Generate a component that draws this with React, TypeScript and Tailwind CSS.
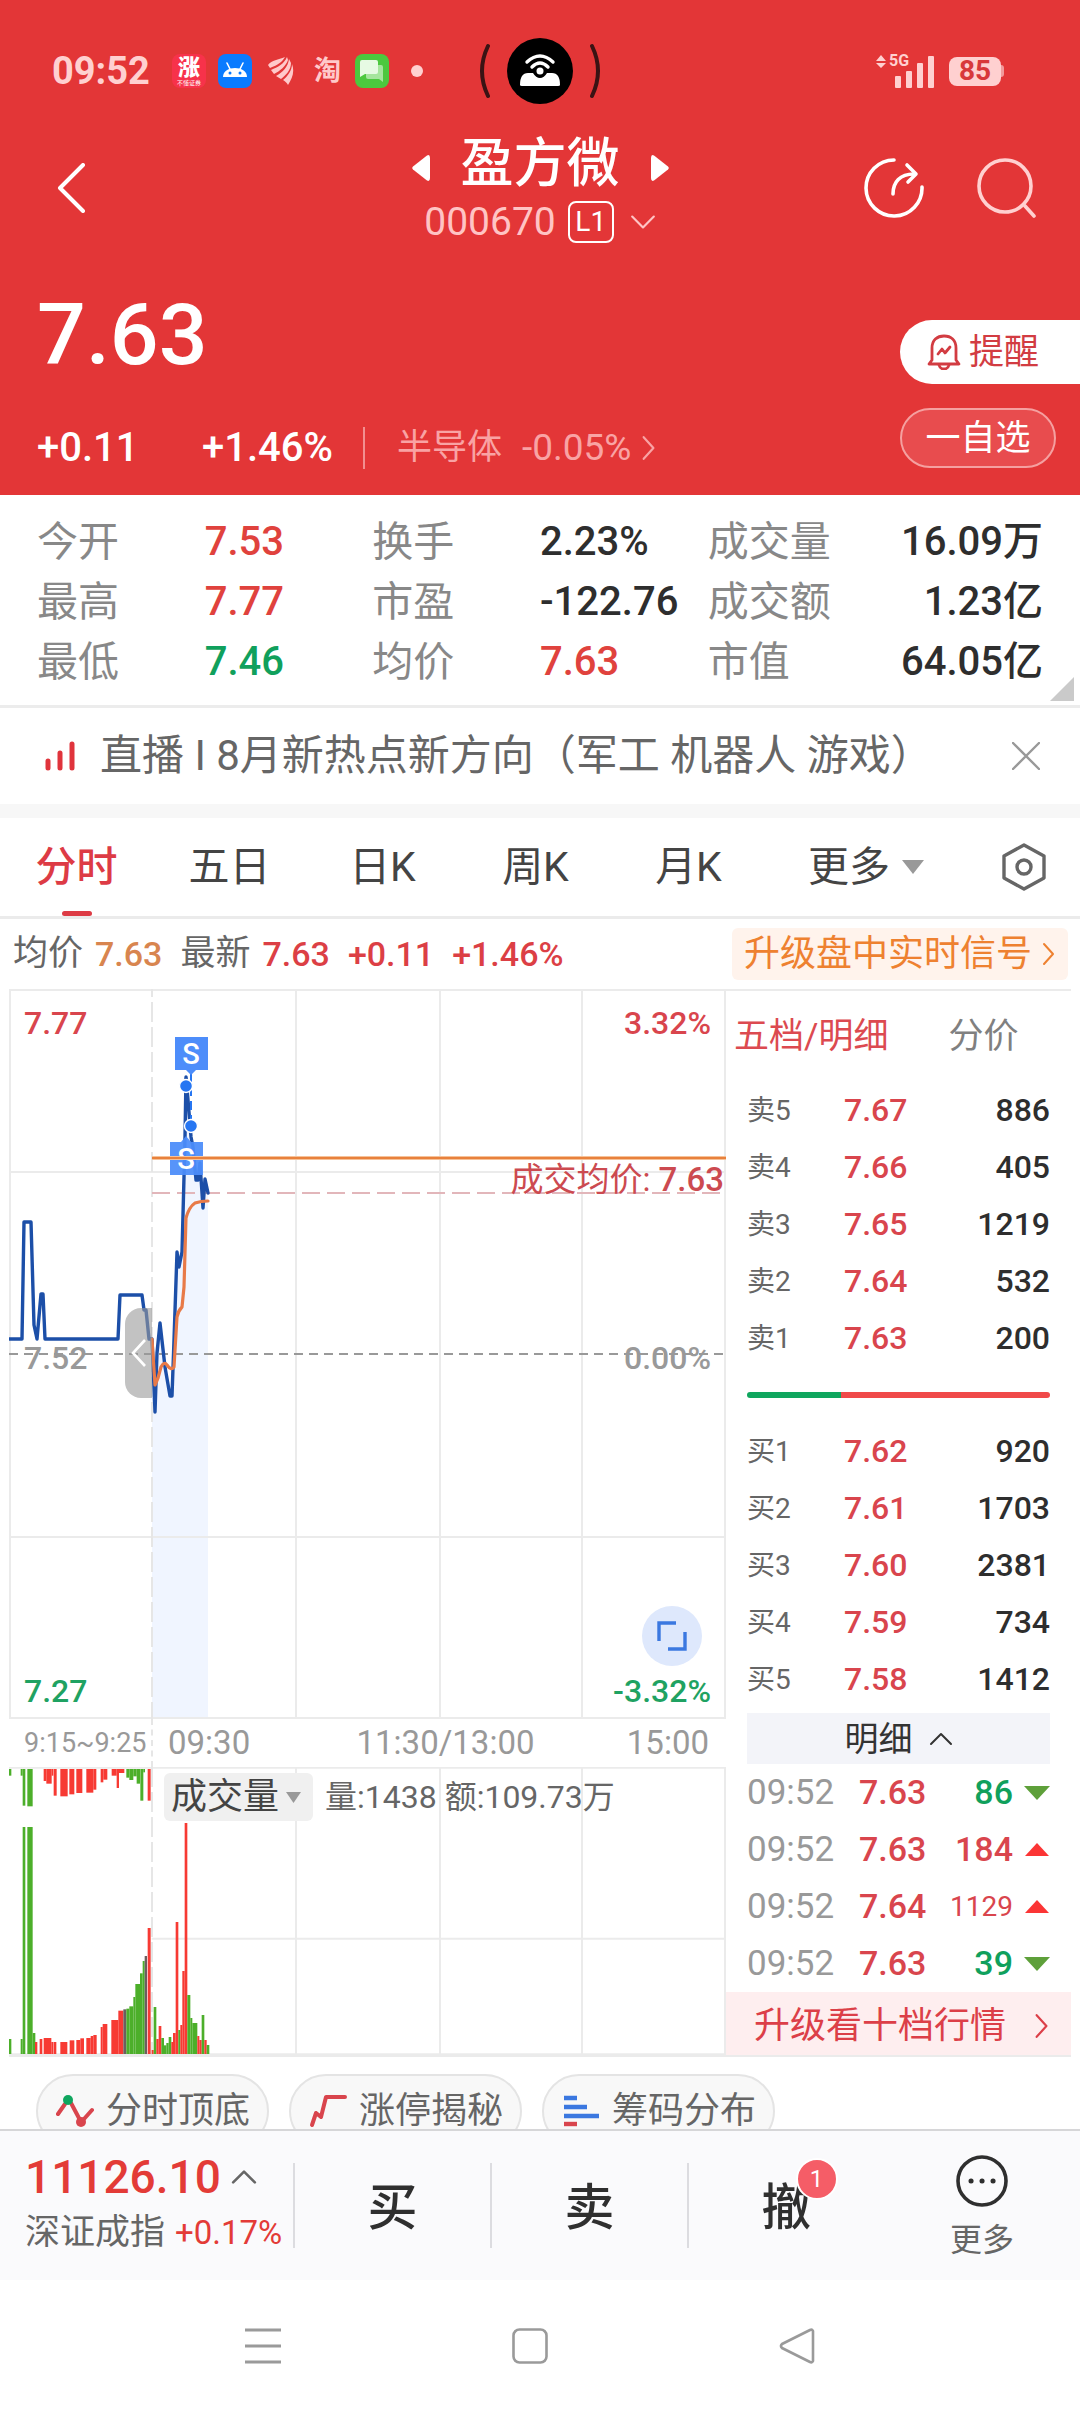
import React from "react";

const RED = "#d9454d";

const stats = [
  { label: "今开", value: "7.53", tone: "text-[#e0423d]" },
  { label: "换手", value: "2.23%", tone: "text-[#2e2e2e]" },
  { label: "成交量", value: "16.09万", tone: "text-[#2e2e2e] text-right" },
  { label: "最高", value: "7.77", tone: "text-[#e0423d]" },
  { label: "市盈", value: "-122.76", tone: "text-[#2e2e2e]" },
  { label: "成交额", value: "1.23亿", tone: "text-[#2e2e2e] text-right" },
  { label: "最低", value: "7.46", tone: "text-[#10a05c]" },
  { label: "均价", value: "7.63", tone: "text-[#e0423d]" },
  { label: "市值", value: "64.05亿", tone: "text-[#2e2e2e] text-right" },
];

const sells = [
  ["卖5", "7.67", "886"],
  ["卖4", "7.66", "405"],
  ["卖3", "7.65", "1219"],
  ["卖2", "7.64", "532"],
  ["卖1", "7.63", "200"],
];

const buys = [
  ["买1", "7.62", "920"],
  ["买2", "7.61", "1703"],
  ["买3", "7.60", "2381"],
  ["买4", "7.59", "734"],
  ["买5", "7.58", "1412"],
];

const ticks = [
  { time: "09:52", price: "7.63", volume: "86", up: false },
  { time: "09:52", price: "7.63", volume: "184", up: true },
  { time: "09:52", price: "7.64", volume: "1129", up: true },
  { time: "09:52", price: "7.63", volume: "39", up: false },
];

const G = "#4caf2a";
const R = "#f73a33";
const N = "#6b5f5f";

/* [x, width, length] of the bars that hang from the top of the volume pane */
const hangingBars: [number, number, number, string][] = [
  [0, 7, 20, G], [35, 6, 20, G], [41, 8, 110, G], [55, 16, 112, G],
  [104, 8, 36, R], [112, 16, 44, R], [128, 5, 20, R], [134, 9, 80, R],
  [154, 22, 82, R], [181, 15, 76, R], [202, 18, 72, R],
  [232, 21, 71, R], [253, 9, 62, R], [275, 8, 40, R], [283, 12, 32, R],
  [308, 15, 20, R], [323, 7, 57, R], [330, 16, 12, R], [352, 9, 26, G],
  [361, 12, 33, G], [373, 10, 22, G], [383, 10, 44, G], [394, 9, 95, G],
  [403, 5, 10, G], [416, 9, 95, R],
];

/* [x, width, height] of the bars that stand on the base line */
const standingBars: [number, number, number, string][] = [
  [0, 7, 45, G], [35, 6, 45, G], [41, 8, 681, G], [55, 16, 681, G],
  [71, 8, 63, G], [78, 7, 36, R], [92, 8, 45, R], [104, 23, 48, R],
  [127, 6, 36, R], [134, 8, 36, R], [154, 21, 36, R], [182, 14, 41, R],
  [202, 12, 42, R], [214, 11, 47, R], [232, 13, 48, R], [245, 8, 54, R],
  [253, 10, 57, R], [275, 6, 81, R], [281, 14, 90, R], [307, 21, 102, R],
  [328, 15, 130, R], [343, 9, 134, N], [352, 9, 136, G], [361, 12, 143, G],
  [373, 6, 171, G], [379, 14, 210, G], [393, 8, 242, G], [401, 6, 279, G],
  [407, 7, 294, N], [416, 9, 378, R], [428, 6, 12, R], [434, 8, 141, G],
  [442, 7, 45, R], [449, 8, 84, R], [457, 8, 48, G], [465, 7, 26, G],
  [472, 7, 33, G], [479, 8, 51, G], [487, 5, 36, R], [492, 8, 63, R],
  [500, 8, 396, R], [508, 6, 72, G], [514, 6, 87, R], [520, 7, 249, R],
  [527, 8, 693, R], [535, 9, 177, G], [544, 6, 108, G], [550, 15, 93, G],
  [565, 6, 54, R], [571, 7, 42, R], [578, 8, 117, G], [586, 7, 42, R],
  [593, 8, 27, G],
];

function Chevron({ dir, className }: { dir: "left" | "right" | "up" | "down"; className: string }) {
  const d = {
    left: "M15 2 L5 12 L15 22",
    right: "M8 2 L17 12 L8 22",
    up: "M2 17 L12 7 L22 17",
    down: "M2 7 L12 17 L22 7",
  }[dir];
  return (
    <svg viewBox="0 0 24 24" className={className} fill="none" stroke="currentColor" strokeLinecap="round" strokeLinejoin="round" aria-hidden="true">
      <path d={d} />
    </svg>
  );
}

function StatusBar() {
  return (
    <div className="grid grid-cols-[1fr_auto_1fr] items-center pt-6">
      <div className="flex items-center pl-[52px]">
        <span className="w-[98px] text-[38px] font-bold leading-[40px] text-[#ffd0d0]">09:52</span>
        <span className="ml-[22px] flex size-[34px] flex-col items-center justify-center rounded-lg bg-[#f7324a] leading-none text-white">
          <span className="text-[22px] font-black leading-[22px]">涨</span>
          <span className="text-[6px] leading-[7px]">不懂证券</span>
        </span>
        <svg viewBox="0 0 34 34" className="ml-3 size-[34px]" aria-hidden="true">
          <rect width="34" height="34" rx="8" fill="#0a7bff" />
          <path d="M5 23 C5 11 29 11 29 23 Z" fill="#fff" />
          <path d="M9 9 L12 15 M25 9 L22 15" stroke="#fff" strokeWidth="1.6" strokeLinecap="round" />
          <circle cx="12" cy="19" r="1.5" fill="#0a7bff" />
          <circle cx="22" cy="19" r="1.5" fill="#0a7bff" />
        </svg>
        <svg viewBox="0 0 26 30" className="ml-4 h-[30px] w-[26px]" fill="#ffc9ca" aria-hidden="true">
          <path d="M0 9 C4 4 10 4 17 1 C14 6 10 9 2 12 Z" />
          <path d="M3 14 C10 11 16 8 19 1 L20 4 C18 10 12 15 6 18 Z" />
          <path d="M8 20 C15 16 20 11 21 3 L23 7 C23 14 18 19 13 23 Z" />
          <path d="M15 24 C20 20 24 14 24 8 C27 16 24 23 20 29 C19 27 17 25 15 24 Z" />
        </svg>
        <span className="ml-5 text-[27px] font-bold leading-[34px] text-[#ffc9ca]">淘</span>
        <svg viewBox="0 0 34 34" className="ml-[14px] size-[34px]" aria-hidden="true">
          <rect width="34" height="34" rx="8" fill="#4cc83e" />
          <path d="M12 11 H26 Q28 11 28 13 V28 L24 25 H13 Q11 25 11 23 V13 Q11 11 12 11 Z" fill="#a5e59d" />
          <path d="M7 6 H21 Q23 6 23 8 V18 Q23 20 21 20 H10 L5 23 V8 Q5 6 7 6 Z" fill="#e6fae3" />
        </svg>
        <span className="ml-[22px] size-3 rounded-full bg-[#ffd0d0]" />
      </div>
      <svg viewBox="0 0 124 94" className="h-[94px] w-[124px]" aria-hidden="true">
        <circle cx="62" cy="47" r="33" fill="#000" />
        <path d="M10 22 Q-2 47 10 72 M114 22 Q126 47 114 72" fill="none" stroke="#3a1314" strokeWidth="4" strokeLinecap="round" />
        <path d="M42 61 Q42 49 50 49 H55 Q58 54 62 54 Q66 54 69 49 H74 Q82 49 82 61 Q82 62 80 62 H44 Q42 62 42 61 Z" fill="#fff" />
        <path d="M49 38 Q62 26 75 38 M54 43 Q62 35 70 43" fill="none" stroke="#fff" strokeWidth="3.4" strokeLinecap="round" />
        <circle cx="62" cy="47" r="3.5" fill="#fff" />
      </svg>
      <div className="flex items-center justify-end gap-[15px] pr-[76px]">
        <div className="relative">
          <svg viewBox="0 0 58 34" className="h-[34px] w-[58px]" fill="#ffd0d0" aria-hidden="true">
            <path d="M0 7 L5 1 L10 7 Z M0 9 L5 14 L10 9 Z" />
            <rect x="19" y="22" width="6" height="12" rx="1" />
            <rect x="30" y="17" width="6" height="17" rx="1" />
            <rect x="41" y="9" width="6" height="25" rx="1" />
            <rect x="52" y="2" width="6" height="32" rx="1" />
          </svg>
          <span className="absolute left-[13px] top-[-1px] text-base font-bold leading-4 text-[#ffd0d0]">5G</span>
        </div>
        <div className="flex items-center">
          <span className="flex h-[29px] w-[52px] items-center justify-center rounded-lg bg-[#ffd0d0] text-[28px] font-bold leading-none text-[#d8383b]">85</span>
          <span className="h-3 w-[3px] rounded-r bg-[#f29a9b]" />
        </div>
      </div>
    </div>
  );
}

function Header() {
  return (
    <header className="bg-[#e33637] pb-5 text-white">
      <StatusBar />
      <div className="mt-3 grid grid-cols-[1fr_auto_1fr] items-center">
        <button aria-label="返回" className="ml-[56px] w-8">
          <svg viewBox="0 0 32 50" className="h-[50px] w-8" fill="none" stroke="currentColor" strokeWidth="4" strokeLinecap="round" strokeLinejoin="round">
            <path d="M27 2 L4 25 L27 48" />
          </svg>
        </button>
        <div className="flex flex-col items-center">
          <div className="flex items-center gap-[31px]">
            <button aria-label="上一只">
              <svg viewBox="0 0 18 26" className="mt-2 h-[26px] w-[18px]" fill="currentColor"><path d="M1 11.5 L15 0.5 Q18 -1 18 3 V23 Q18 27 15 25.5 L1 14.5 Q-0.5 13 1 11.5 Z" /></svg>
            </button>
            <h1 className="text-[53px] font-medium leading-[68px]">盈方微</h1>
            <button aria-label="下一只">
              <svg viewBox="0 0 18 26" className="mt-2 h-[26px] w-[18px]" fill="currentColor"><path d="M17 11.5 L3 0.5 Q0 -1 0 3 V23 Q0 27 3 25.5 L17 14.5 Q18.5 13 17 11.5 Z" /></svg>
            </button>
          </div>
          <div className="flex items-center text-[#ffc4c4]">
            <span className="text-[39px] leading-[48px]">000670</span>
            <span className="ml-3 flex h-[42px] w-[46px] items-center justify-center rounded-lg border-2 border-white text-[28px] leading-none text-white">L1</span>
            <Chevron dir="down" className="ml-4 size-[26px] stroke-[2]" />
          </div>
        </div>
        <div className="flex items-center justify-end gap-[52px] pr-[44px]">
          <button aria-label="分享">
            <svg viewBox="0 0 60 60" className="size-[60px]" fill="none" stroke="currentColor" strokeWidth="3.6" strokeLinecap="round" strokeLinejoin="round">
              <path d="M30 2 A28 28 0 1 0 58 29" />
              <path d="M29 36 C29 24 36 16 50 16" />
              <path d="M43 7 L52 16 L44 24" />
            </svg>
          </button>
          <button aria-label="搜索">
            <svg viewBox="0 0 60 60" className="size-[60px]" fill="none" stroke="#ffd0d0" strokeWidth="3.6" strokeLinecap="round">
              <circle cx="29" cy="28" r="26" />
              <path d="M49 48 L58 58" />
            </svg>
          </button>
        </div>
      </div>
      <div className="mt-[41px] flex items-end justify-between">
        <div className="pl-[37px]">
          <p className="text-[86px] font-medium leading-[96px]">7.63</p>
          <div className="mt-[38px] flex items-center leading-[54px]">
            <span className="w-[165px] text-[40px] font-medium">+0.11</span>
            <span className="text-[40px] font-medium">+1.46%</span>
            <span className="ml-[30px] h-[42px] w-[2px] bg-[#f28f90]" />
            <a href="#sector" className="ml-[32px] flex items-center text-[#f9a3a4]">
              <span className="text-[35px]">半导体</span>
              <span className="ml-5 text-[37px]">-0.05%</span>
              <Chevron dir="right" className="ml-1 size-[26px] stroke-[2]" />
            </a>
          </div>
        </div>
        <div className="flex flex-col gap-6 pb-[7px]">
          <button className="flex h-16 w-[180px] items-center gap-2 rounded-l-full bg-white pl-[27px] text-[35px] leading-none text-[#d23c42]">
            <svg viewBox="0 0 34 36" className="h-9 w-[34px]" fill="none" stroke="currentColor" strokeWidth="2.8" strokeLinecap="round" strokeLinejoin="round" aria-hidden="true">
              <path d="M5 26 V14 C5 6 10 2 17 2 C24 2 29 6 29 14 V26 L32 30 H2 Z" />
              <path d="M12 31 Q13 35 17 35 Q21 35 22 31" />
              <path d="M11 20 L15 15 L18 19 L23 13" />
            </svg>
            提醒
          </button>
          <button className="h-[60px] w-[156px] rounded-full border-2 border-[#f5a0a0] bg-[#e84c4e] text-[35px] leading-none text-white">一自选</button>
        </div>
      </div>
    </header>
  );
}

function Stats() {
  return (
    <section className="relative border-b-[3px] border-[#ececec] px-[37px] pb-[13px] pt-[17px]">
      <dl className="grid grid-cols-3">
        {stats.map((s) => (
          <div key={s.label} className="grid grid-cols-2 leading-[60px]">
            <dt className="whitespace-nowrap text-[41px] text-[#888]">{s.label}</dt>
            <dd className={`whitespace-nowrap text-[40px] font-medium ${s.tone}`}>{s.value}</dd>
          </div>
        ))}
      </dl>
      <svg viewBox="0 0 24 24" className="absolute bottom-1 right-[6px] size-6" fill="#cacaca" aria-hidden="true"><path d="M24 0 V24 H0 Z" /></svg>
    </section>
  );
}

function Promo() {
  return (
    <section className="flex items-center border-b-[14px] border-[#f7f7f7] pl-[45px] pr-10">
      <svg viewBox="0 0 30 30" className="size-[30px]" stroke="#e0343c" strokeWidth="5" strokeLinecap="round" aria-hidden="true">
        <path d="M3 20 V27 M15 12 V27 M27 3 V27" />
      </svg>
      <a href="#live" className="ml-[25px] flex-1 whitespace-nowrap text-[42px] leading-[96px] text-[#666]">直播 I 8月新热点新方向（军工 机器人 游戏）</a>
      <button aria-label="关闭">
        <svg viewBox="0 0 28 28" className="size-7" stroke="#999" strokeWidth="2.4" strokeLinecap="round"><path d="M1 1 L27 27 M27 1 L1 27" /></svg>
      </button>
    </section>
  );
}

function PeriodTabs() {
  return (
    <nav className="grid grid-cols-[153fr_153fr_153fr_153fr_153fr_202fr_113fr] items-center justify-items-center border-b-[3px] border-[#ebebeb] text-[41px] leading-[98px] text-[#444]">
      <button className="relative font-medium text-[#dd3b45]">
        分时
        <span className="absolute inset-x-[26px] bottom-0 h-[5px] rounded-full bg-[#dd3b45]" />
      </button>
      <button>五日</button>
      <button>日K</button>
      <button>周K</button>
      <button>月K</button>
      <button className="flex items-center">
        更多
        <svg viewBox="0 0 22 14" className="ml-3 h-[14px] w-[22px]" fill="#999" aria-hidden="true"><path d="M0 0 H22 L11 14 Z" /></svg>
      </button>
      <button aria-label="设置">
        <svg viewBox="0 0 44 48" className="h-12 w-11" fill="none" stroke="#666" strokeWidth="3.4" strokeLinejoin="round">
          <path d="M22 2 L42 13 V35 L22 46 L2 35 V13 Z" />
          <circle cx="22" cy="24" r="7" />
        </svg>
      </button>
    </nav>
  );
}

function InfoRow() {
  return (
    <div className="flex items-center justify-between pl-[13px] pr-3 leading-[70px]">
      <p className="flex items-center text-[34px]">
        <span className="text-[35px] text-[#666]">均价</span>
        <span className="ml-3 font-medium text-[#d8854f]">7.63</span>
        <span className="ml-[18px] text-[35px] text-[#666]">最新</span>
        <span className="ml-3 font-medium text-[#dc3f45]">7.63</span>
        <span className="ml-[18px] font-medium text-[#dc3f45]">+0.11</span>
        <span className="ml-[18px] font-medium text-[#dc3f45]">+1.46%</span>
      </p>
      <a href="#signals" className="flex h-[52px] items-center rounded-md bg-[#fff3ec] pl-3 pr-2 text-[36px] leading-none text-[#ee8130]">
        升级盘中实时信号
        <Chevron dir="right" className="ml-1 size-6 stroke-[2]" />
      </a>
    </div>
  );
}

function PriceChart() {
  return (
    <div className="relative h-[730px]">
      <svg viewBox="0 0 717 730" preserveAspectRatio="none" className="size-full" fill="none" aria-label="分时走势">
        <path
          d="M143 730 V350 L146 423 L148 364 L151 334 L156 378 L161 407 H163 L165 351 L168 263 L173 263 L175 188 L177 88 L182 148 L187 191 L191 180 L194 219 L196 190 L199 204 V730 Z"
          fill="#f0f5ff"
        />
        <path d="M0 1 H717 M0 183 H717 M0 548 H717 M0 729 H717 M1 0 V730 M287 0 V730 M431 0 V730 M573 0 V730 M716 0 V730" stroke="#ebebeb" strokeWidth="2" />
        <path d="M143 0 V730" stroke="#e6e6e6" strokeWidth="2" strokeDasharray="20 5" strokeDashoffset="12" />
        <path d="M143 204 H717" stroke="#e2b6ba" strokeWidth="2" strokeDasharray="18 7" />
        <path d="M0 365 H717" stroke="#999" strokeWidth="2" strokeDasharray="9 6" />
        <path
          d="M0 350 H13 L15 233 H22 L25 336 L28 350 L32 305 H34 L36 350 H109 L111 306 H133 L135 321 H137 L140 350 H143 L146 423 L148 364 L151 334 L156 378 L161 407 H163 L165 351 L168 263 L170 278 L173 263 L175 188 L176 148 L177 88 L179 111 L182 148 L184 158 L187 191 H189 L191 174 L194 219 L196 190 L199 204"
          stroke="#1c4fa8"
          strokeWidth="3.4"
          strokeLinejoin="round"
          strokeLinecap="round"
        />
        <path
          d="M143 350 L146 396 L149 389 L152 378 Q155 372 158 376 Q162 382 165 378 L168 328 Q169 322 173 318 L175 298 L177 229 Q180 218 186 214 Q192 212 199 212"
          stroke="#e87a48"
          strokeWidth="3.2"
          strokeLinejoin="round"
          strokeLinecap="round"
        />
        <path d="M182 84 V138" stroke="#2676f2" strokeWidth="2" strokeDasharray="9 5" />
        <path d="M166 48 H199 V81 H187 L182 86 L177 81 H166 Z" fill="#4d8dfa" />
        <path d="M161 153 H172 L177 147 L182 153 H194 V186 H161 Z" fill="#4d8dfa" fillOpacity="0.94" />
        <circle cx="177" cy="97" r="6.5" fill="#2676f2" stroke="#fff" strokeWidth="1.4" />
        <circle cx="182" cy="137" r="6.5" fill="#2676f2" stroke="#fff" strokeWidth="1.4" />
        <text x="182" y="75" textAnchor="middle" fill="#fff" fontSize="29" fontWeight="500">S</text>
        <text x="177" y="180" textAnchor="middle" fill="#fff" fontSize="29" fontWeight="500">S</text>
        <path d="M143 169 H717" stroke="#fbd9b8" strokeWidth="4" />
        <path d="M143 169 H717" stroke="#e8813c" strokeWidth="2.4" />
      </svg>
      <div className="absolute inset-0 text-[32px] font-medium leading-10">
        <span className="absolute left-[15px] top-[14px] text-[#d9454d]">7.77</span>
        <span className="absolute right-[15px] top-[14px] text-[#d9454d]">3.32%</span>
        <span className="absolute right-[2px] top-[171px] text-[33px] text-[#cc4a50]">
          <span className="font-normal">成交均价: </span>7.63
        </span>
        <span className="absolute left-[15px] top-[349px] text-[#999]">7.52</span>
        <span className="absolute right-[15px] top-[349px] text-[#999]">0.00%</span>
        <span className="absolute bottom-2 left-[15px] text-[#1fa262]">7.27</span>
        <span className="absolute bottom-2 right-[15px] text-[#1fa262]">-3.32%</span>
        <button aria-label="展开竞价" className="absolute left-[116px] top-[319px] flex h-[90px] w-[27px] items-center justify-center rounded-l-2xl bg-[#999]/60 text-white">
          <svg viewBox="0 0 16 30" className="h-[30px] w-4" fill="none" stroke="currentColor" strokeWidth="2.6"><path d="M14 2 L2 15 L14 28" /></svg>
        </button>
        <button aria-label="全屏" className="absolute bottom-[53px] right-6 flex size-[60px] items-center justify-center rounded-full bg-[#dee8fc]">
          <svg viewBox="0 0 30 30" className="size-[30px]" fill="none" stroke="#3b78e0" strokeWidth="3.4"><path d="M2 20 V2 H19 M28 11 V28 H11" /></svg>
        </button>
      </div>
    </div>
  );
}

function TimeAxis() {
  return (
    <div className="grid grid-cols-[144px_1fr_auto_1fr] items-center text-[33px] leading-[48px] text-[#999]">
      <span className="border-r-2 border-dashed border-[#e6e6e6] pl-[15px] text-[27px]">9:15~9:25</span>
      <span className="pl-[15px]">09:30</span>
      <span className="pl-3">11:30/13:00</span>
      <span className="pr-[17px] text-right">15:00</span>
    </div>
  );
}

function VolumeChart() {
  return (
    <div className="relative h-[288px]">
      <svg viewBox="0 0 2151 864" preserveAspectRatio="none" className="size-full" fill="none" aria-label="成交量">
        <path d="M0 2 H2151 M428 515 H2151 M0 862 H2151 M861 0 V864 M1293 0 V864 M1719 0 V864 M2148 0 V864" stroke="#ebebeb" strokeWidth="6" />
        <path d="M429 0 V864" stroke="#e6e6e6" strokeWidth="6" strokeDasharray="60 15" />
        {hangingBars.map(([x, w, h, c]) => (
          <rect key={`t${x}`} x={x} y="6" width={w} height={h} fill={c} />
        ))}
        {standingBars.map(([x, w, h, c]) => (
          <rect key={`b${x}`} x={x} y={861 - h} width={w} height={h} fill={c} />
        ))}
      </svg>
      <div className="absolute left-[155px] top-[6px] flex items-center">
        <button className="flex h-12 items-center rounded-md bg-[#f0f0f0] pl-[7px] pr-2 text-[36px] leading-none text-[#444]">
          成交量
          <svg viewBox="0 0 15 11" className="ml-[7px] mr-1 h-[11px] w-[15px]" fill="#999" aria-hidden="true"><path d="M0 0 H15 L7.5 11 Z" /></svg>
        </button>
        <span className="ml-3 whitespace-nowrap text-[32px] leading-10 text-[#666]">量:1438 额:109.73万</span>
      </div>
    </div>
  );
}

function LevelTable({ rows, label }: { rows: string[][]; label: string }) {
  return (
    <table aria-label={label} className="w-full table-fixed leading-[57px]">
      <tbody>
        {rows.map(([name, price, volume]) => (
          <tr key={name}>
            <th scope="row" className="w-[97px] p-0 text-left text-[28px] font-normal text-[#666]">{name}</th>
            <td className="w-[90px] p-0 text-[32px] font-medium text-[#d9454d]">{price}</td>
            <td className="p-0 text-right text-[32px] font-medium text-[#2e2e2e]">{volume}</td>
          </tr>
        ))}
      </tbody>
    </table>
  );
}

function OrderBook() {
  return (
    <aside className="flex w-[345px] flex-col">
      <div className="flex gap-[60px] pl-2 text-[35px] leading-[91px]">
        <button className="text-[#dc4a50]">五档/明细</button>
        <button className="text-[#808080]">分价</button>
      </div>
      <div className="pl-[21px] pr-[21px]">
        <LevelTable rows={sells} label="卖盘" />
        <div className="my-[25px] flex h-[6px] overflow-hidden rounded-full">
          <span className="w-[31%] bg-[#0fa65e]" />
          <span className="flex-1 bg-[#f04a4a]" />
        </div>
        <LevelTable rows={buys} label="买盘" />
        <button className="mt-[5px] flex h-[51px] w-full items-center justify-center gap-4 bg-[#f3f4f9] text-[34px] leading-none text-[#333]">
          明细
          <Chevron dir="up" className="size-6 stroke-[2]" />
        </button>
        <table aria-label="成交明细" className="w-full table-fixed leading-[57px]">
          <tbody>
            {ticks.map((t, i) => (
              <tr key={i}>
                <td className="w-[112px] p-0 text-[35px] text-[#999]">{t.time}</td>
                <td className="w-[76px] p-0 text-[34px] font-medium text-[#d9454d]">{t.price}</td>
                <td className={`p-0 ${t.up ? "text-[#d9454d]" : "text-[#10a05c]"}`}>
                  <span className="flex items-center justify-end gap-[11px]">
                    <span className={t.volume.length > 3 ? "text-[28px]" : "text-[34px] font-medium"}>{t.volume}</span>
                    <svg viewBox="0 0 26 14" className="h-[14px] w-[26px]" aria-label={t.up ? "买入" : "卖出"}>
                      <path d={t.up ? "M1 13 L13 0 L25 13 Z" : "M0 0 H26 L13 14 Z"} fill={t.up ? "#fb3535" : "#5ea03a"} />
                    </svg>
                  </span>
                </td>
              </tr>
            ))}
          </tbody>
        </table>
      </div>
      <a href="#level2" className="flex flex-1 items-center justify-between bg-[#feeeef] pl-7 pr-[17px] pt-1 text-[36px] leading-[56px] text-[#dc3f48]">
        升级看十档行情
        <Chevron dir="right" className="size-[26px] stroke-[2]" />
      </a>
    </aside>
  );
}

function Chips() {
  const chip = "flex h-[74px] shrink-0 items-center gap-3 rounded-full border-2 border-[#e4e4e4] bg-[#f8f8f8] pl-[18px] pr-[17px] text-[36px] leading-none text-[#666]";
  return (
    <div className="flex items-start gap-5 px-9 pt-[17px]">
      <button className={chip}>
        <svg viewBox="0 0 38 34" className="h-[34px] w-[38px]" fill="none" stroke={RED} strokeWidth="4" strokeLinecap="round" aria-hidden="true">
          <path d="M2 20 L9 10 M15 9 L24 26 M28 25 L36 16" />
          <circle cx="12" cy="6" r="5" fill="#0fa65e" stroke="none" />
          <circle cx="25" cy="28" r="5" fill={RED} stroke="none" />
        </svg>
        分时顶底
      </button>
      <button className={chip}>
        <svg viewBox="0 0 38 34" className="h-[34px] w-[38px]" fill="none" stroke={RED} strokeWidth="4" strokeLinecap="round" strokeLinejoin="round" aria-hidden="true">
          <path d="M3 31 L7 19 L12 23 L17 3 H36" />
        </svg>
        涨停揭秘
      </button>
      <button className={chip}>
        <svg viewBox="0 0 38 34" className="h-[34px] w-[38px]" strokeWidth="4.4" aria-hidden="true">
          <path d="M2 4 H15 M2 13 H25 M2 22 H37" stroke="#3b78e0" />
          <path d="M2 30 H15" stroke={RED} />
        </svg>
        筹码分布
      </button>
    </div>
  );
}

function TradeBar() {
  const action = "my-8 flex items-center justify-center border-l-2 border-[#dcdce0] pt-1 text-[50px] font-medium leading-[80px] text-[#2f2f2f]";
  return (
    <div className="grid grid-cols-[293px_197px_197px_197px_1fr] border-t-2 border-[#d6d6d8] bg-[#fafafc]">
      <button className="flex flex-col justify-center whitespace-nowrap pl-[25px] text-left">
        <span className="flex items-center text-[46px] font-medium leading-[54px] text-[#e33b37]">
          11126.10
          <Chevron dir="up" className="ml-[10px] size-[26px] text-[#666] stroke-[2.4]" />
        </span>
        <span className="flex items-center text-[35px] leading-[58px] text-[#666]">
          深证成指
          <span className="ml-[10px] text-[33px] text-[#e33b37]">+0.17%</span>
        </span>
      </button>
      <button className={action}>买</button>
      <button className={action}>卖</button>
      <button className={action}>
        <span className="relative">
          撤
          <span className="absolute -right-[26px] -top-[10px] flex size-[42px] items-center justify-center rounded-full border-2 border-white bg-[#f55d67] text-2xl font-normal leading-none text-white">1</span>
        </span>
      </button>
      <button className="mb-5 mt-6 flex flex-col items-center gap-[13px] border-[#dcdce0]">
        <svg viewBox="0 0 52 52" className="size-[52px]" fill="none" stroke="#2f2f2f" strokeWidth="3.6" aria-hidden="true">
          <circle cx="26" cy="26" r="24" />
          <path d="M15 26 h0.1 M26 26 h0.1 M37 26 h0.1" strokeWidth="5" strokeLinecap="round" />
        </svg>
        <span className="text-[32px] leading-10 text-[#666]">更多</span>
      </button>
    </div>
  );
}

function SystemNav() {
  return (
    <nav className="grid grid-cols-3 justify-items-center bg-white pb-12 pl-[130px] pr-[150px] pt-12">
      <button aria-label="最近任务">
        <svg viewBox="0 0 36 36" className="size-9" stroke="#9a9a9a" strokeWidth="3"><path d="M0 2 H36 M0 18 H36 M0 34 H36" /></svg>
      </button>
      <button aria-label="主屏幕">
        <svg viewBox="0 0 36 36" className="size-9" fill="none" stroke="#9a9a9a" strokeWidth="2.6"><rect x="1.5" y="1.5" width="33" height="33" rx="6" /></svg>
      </button>
      <button aria-label="返回上级">
        <svg viewBox="0 0 36 36" className="size-9" fill="none" stroke="#9a9a9a" strokeWidth="2.6" strokeLinejoin="round"><path d="M34 3 V33 Q33 35 31 34 L3 20 Q1 18 3 16 L31 2 Q33 1 34 3 Z" /></svg>
      </button>
    </nav>
  );
}

export default function App() {
  return (
    <div className="flex h-screen flex-col overflow-hidden bg-white font-[Roboto,'Noto_Sans_CJK_SC',sans-serif]">
      <main className="min-h-0 flex-1 overflow-hidden">
        <Header />
        <Stats />
        <Promo />
        <PeriodTabs />
        <InfoRow />
        <section className="mx-[9px] flex border-b-2 border-[#ebebeb]">
          <div className="min-w-0 flex-1">
            <PriceChart />
            <TimeAxis />
            <VolumeChart />
          </div>
          <div className="flex border-t-2 border-[#ebebeb]">
            <OrderBook />
          </div>
        </section>
        <Chips />
      </main>
      <footer>
        <TradeBar />
        <SystemNav />
      </footer>
    </div>
  );
}
